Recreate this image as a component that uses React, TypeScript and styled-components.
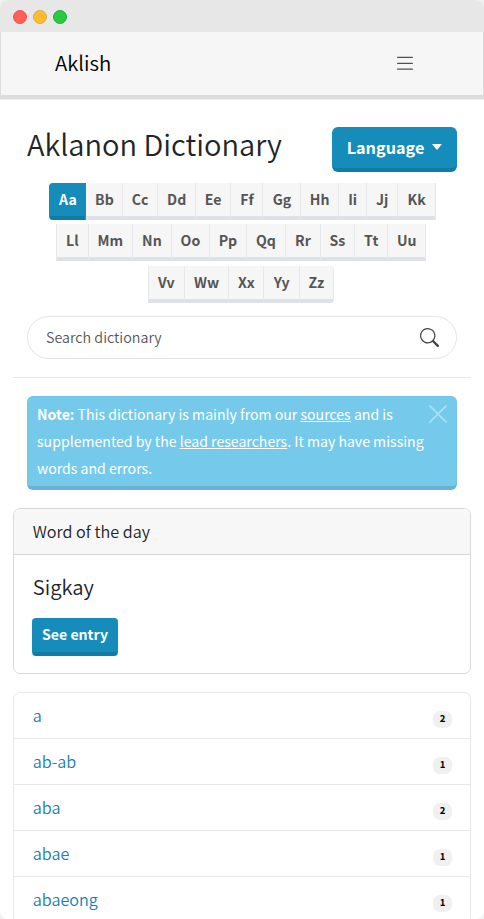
import React from "react";
import styled, { createGlobalStyle } from "styled-components";
import { BsSearch } from "react-icons/bs";

const GlobalStyle = createGlobalStyle`
  * { box-sizing: border-box; }
  html { overflow: hidden; background: #f1f1f1; }
  body { margin: 0; height: 919px; overflow: hidden; }
  h1, h2, h3, p, ul { margin: 0; padding: 0; font-weight: inherit; }
  ul { list-style: none; }
  a { color: inherit; }
  button, input { font: inherit; }
`;

const Frame = styled.div`
  width: 484px;
  height: 919px;
  overflow: hidden;
  display: flex;
  flex-direction: column;
  background: #fff;
  border-radius: 8px;
  color: #212529;
  font-family: "Noto Sans CJK SC", "Noto Sans", sans-serif;
  font-size: 14.1px;
  font-weight: 350;
`;

const TitleBar = styled.div`
  flex: none;
  height: 32px;
  padding: 1px 13px 0;
  display: flex;
  align-items: center;
  gap: 6px;
  background: #e7e7e7;
`;

const Light = styled.span<{ $fill: string; $edge: string }>`
  width: 14px;
  height: 14px;
  border-radius: 50%;
  background: ${(p) => p.$fill};
  border: 1px solid ${(p) => p.$edge};
`;

const Nav = styled.nav`
  flex: none;
  height: 67px;
  padding: 0 70px 0 54px;
  display: flex;
  align-items: center;
  justify-content: space-between;
  background: #f6f6f6;
  border: solid #dcdcdc;
  border-width: 0 1px 4px;
  box-shadow: 0 1px 0 #f1f1f1;
`;

const Brand = styled.a`
  margin-bottom: 4px;
  color: #000;
  font-size: 20.4px;
  line-height: 30px;
  text-decoration: none;
`;

const MenuButton = styled.button`
  display: flex;
  padding: 0;
  margin-bottom: 1px;
  border: 0;
  background: none;
  color: #505050;
`;

const Main = styled.main`
  flex: none;
  padding: 28px 13px 0;
`;

const Heading = styled.header`
  height: 45px;
  padding: 0 14px;
  display: flex;
  justify-content: space-between;
`;

const Title = styled.h1`
  margin-top: -3px;
  font-size: 29px;
  line-height: 38px;
`;

const PrimaryButton = styled.button<{ $large?: boolean }>`
  display: flex;
  align-items: center;
  justify-content: center;
  gap: 8px;
  width: ${(p) => (p.$large ? 125 : 86)}px;
  height: ${(p) => (p.$large ? 45 : 38)}px;
  padding: 0 0 3px;
  border: 1px solid #158cba;
  border-bottom: 4px solid #127ba3;
  border-radius: ${(p) => (p.$large ? 6 : 4)}px;
  background: #158cba;
  color: #fff;
  font-weight: 700;
  font-size: ${(p) => (p.$large ? 16.2 : 14.1)}px;
  line-height: 24px;
`;

const Caret = styled.span`
  border: solid transparent;
  border-width: 6px 5.5px 0;
  border-top-color: #fff;
`;

const Alphabet = styled.div`
  padding-top: 11px;
  display: flex;
  flex-direction: column;
  align-items: center;
`;

const LetterRow = styled.div<{ $shift: number; $gap: number }>`
  display: flex;
  height: 37px;
  margin-left: ${(p) => p.$shift}px;
  margin-bottom: ${(p) => p.$gap}px;
`;

const Letter = styled.button<{ $w: number; $active?: boolean; $last?: boolean }>`
  width: ${(p) => p.$w}px;
  padding: 0 0 1px 0.8px;
  border: solid #e6e8eb;
  border-width: 0 1px 4px 0;
  border-bottom-color: #dee2e6;
  background: #f6f6f6;
  color: #555;
  font-size: 14.1px;
  font-weight: 700;
  line-height: 20px;
  &:first-child { border-left-width: 1px; }
  ${(p) => p.$active && "background: #158cba; color: #fff; border-color: #158cba; border-bottom-color: #127ba3; border-radius: 4px 0 0 4px;"}
  ${(p) => p.$last && "border-radius: 0 4px 4px 0;"}
`;

const SearchBox = styled.label`
  height: 43px;
  margin: 13px 14px 0;
  padding: 0 17px 0 18px;
  display: flex;
  align-items: center;
  justify-content: space-between;
  border: 1px solid #e3e5e8;
  border-radius: 22px;
  color: #444;
`;

const SearchInput = styled.input`
  width: 300px;
  height: 24px;
  margin-bottom: 2px;
  padding: 0;
  border: 0;
  outline: 0;
  background: none;
  font-size: 14.3px;
  &::placeholder { color: #55585b; opacity: 1; }
`;

const Divider = styled.hr`
  margin: 18px 0;
  border: 0;
  height: 1px;
  background: #e8e8e8;
`;

const Alert = styled.div`
  height: 94px;
  margin: 0 14px;
  padding: 4px 9px 0;
  display: flex;
  justify-content: space-between;
  border: 1px solid #70c6ea;
  border-bottom: 4px solid #66b3d3;
  border-radius: 6px;
  background: #75caeb;
  color: #fff;
  font-weight: 400;
  line-height: 27px;
  white-space: nowrap;
`;

const AlertText = styled.p``;

const CloseIcon = styled.svg`
  flex: none;
  width: 18px;
  height: 18px;
  margin-top: 4px;
`;

const Card = styled.section`
  height: 166px;
  margin-top: 18px;
  border: 1px solid #d9dadb;
  border-radius: 7px;
  overflow: hidden;
`;

const CardHeader = styled.h2`
  height: 46px;
  padding: 0 18.7px;
  background: #f7f7f7;
  border-bottom: 1px solid #d6d7d8;
  font-size: 16.2px;
  line-height: 44px;
`;

const CardBody = styled.div`
  padding: 16px 18px 0;
`;

const Word = styled.h3`
  margin: 0 0 17px 0.7px;
  font-size: 20.3px;
  line-height: 30px;
`;

const Entries = styled.ul`
  margin-top: 18px;
  border: 1px solid #e6e8ea;
  border-radius: 7px;
`;

const Entry = styled.li`
  height: 46px;
  padding: 0 18px 0 18.7px;
  display: flex;
  align-items: center;
  justify-content: space-between;
  border-bottom: 1px solid #e6e8ea;
  color: #1a7fb2;
  font-size: 16.2px;
  line-height: 27px;
`;

const Badge = styled.span`
  width: 19px;
  height: 17px;
  margin-top: 7px;
  border-radius: 7px;
  background: #f0f0f0;
  color: #000;
  font-size: 9.6px;
  font-weight: 700;
  line-height: 15px;
  text-align: center;
`;

const rows: { shift: number; gap: number; letters: [string, number][] }[] = [
  { shift: 0.5, gap: 4, letters: [["Aa", 37.5], ["Bb", 36.5], ["Cc", 35], ["Dd", 38], ["Ee", 35], ["Ff", 32.5], ["Gg", 37.5], ["Hh", 38], ["Ii", 28], ["Jj", 31], ["Kk", 38]] },
  { shift: -3, gap: 5, letters: [["Ll", 33], ["Mm", 44], ["Nn", 39], ["Oo", 38], ["Pp", 37], ["Qq", 39], ["Rr", 35], ["Ss", 34], ["Tt", 33.5], ["Uu", 37.5]] },
  { shift: -3, gap: 0, letters: [["Vv", 37], ["Ww", 44.5], ["Xx", 35], ["Yy", 35.5], ["Zz", 34]] },
];

const entries: [string, number][] = [["a", 2], ["ab-ab", 1], ["aba", 2], ["abae", 1], ["abaeong", 1]];

export default function App() {
  return (
    <>
      <GlobalStyle />
      <Frame>
        <TitleBar>
          <Light $fill="#ff5f57" $edge="#ec5650" />
          <Light $fill="#ffbd2e" $edge="#e0a746" />
          <Light $fill="#28ca41" $edge="#20ae37" />
        </TitleBar>
        <Nav>
          <Brand>Aklish</Brand>
          <MenuButton aria-label="Menu">
            <svg width="16" height="14" viewBox="0 0 16 14" stroke="currentColor" strokeWidth="1.2" strokeLinecap="round">
              <path d="M.6 1.3h14.8M.6 7.3h14.8M.6 13.2h14.8" />
            </svg>
          </MenuButton>
        </Nav>
        <Main>
          <Heading>
            <Title>Aklanon Dictionary</Title>
            <PrimaryButton $large>Language<Caret /></PrimaryButton>
          </Heading>
          <Alphabet>
            {rows.map((row, r) => (
              <LetterRow key={r} $shift={row.shift} $gap={row.gap}>
                {row.letters.map(([text, w]) => (
                  <Letter key={text} $w={w} $active={text === "Aa"} $last={text === "Zz"}>{text}</Letter>
                ))}
              </LetterRow>
            ))}
          </Alphabet>
          <SearchBox>
            <SearchInput placeholder="Search dictionary" />
            <BsSearch size={19} />
          </SearchBox>
          <Divider />
          <Alert>
            <AlertText>
              <b>Note:</b> This dictionary is mainly from our <u>sources</u> and is<br />
              supplemented by the <u>lead researchers</u>. It may have missing<br />
              words and errors.
            </AlertText>
            <CloseIcon viewBox="0 0 18 18" fill="none" stroke="#b5e2f5" strokeWidth="1.5" strokeLinecap="round">
              <path d="M1 1L17 17M17 1L1 17" />
            </CloseIcon>
          </Alert>
          <Card>
            <CardHeader>Word of the day</CardHeader>
            <CardBody>
              <Word>Sigkay</Word>
              <PrimaryButton>See entry</PrimaryButton>
            </CardBody>
          </Card>
          <Entries>
            {entries.map(([word, count]) => (
              <Entry key={word}>{word}<Badge>{count}</Badge></Entry>
            ))}
          </Entries>
        </Main>
      </Frame>
    </>
  );
}
